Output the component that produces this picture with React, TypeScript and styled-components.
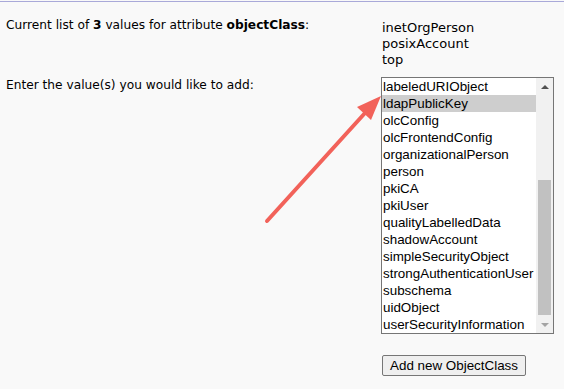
import React from "react";
import styled, { createGlobalStyle } from "styled-components";

const Global = createGlobalStyle`
  html, body { margin: 0; padding: 0; background: #f9f9f9; }
  body { width: 564px; height: 389px; overflow: hidden; }
`;

const Page = styled.div`
  position: relative;
  margin-top: 1px;
  border-top: 1px solid #a9a9d9;
  height: 387px;
  padding: 14px 0 0 6px;
  box-sizing: border-box;
`;

const Form = styled.div`
  display: grid;
  grid-template-columns: 375px 1fr;
  row-gap: 8px;
  font-family: "DejaVu Sans", Verdana, sans-serif;
  font-size: 12.2px;
  color: #000;
`;

const Label = styled.div`
  line-height: 16px;
  padding-top: 1px;
`;

const Values = styled.div`
  display: flex;
  flex-direction: column;
  font-size: 13px;
  line-height: 16px;
  padding-top: 4px;
  padding-left: 1px;
`;

const ListBox = styled.div`
  display: flex;
  width: 173px;
  height: 257px;
  box-sizing: border-box;
  border: 1px solid #767676;
  background: #fff;
  margin-top: 1px;
`;

const Items = styled.div`
  flex: 1;
  display: flex;
  flex-direction: column;
  overflow: hidden;
  justify-content: flex-end;
`;

const Item = styled.div<{ $selected?: boolean }>`
  height: 17px;
  line-height: 17px;
  flex: none;
  padding-left: 1px;
  font-family: "Liberation Sans", Arial, sans-serif;
  font-size: 13.4px;
  color: #000;
  white-space: nowrap;
  background: ${(p) => (p.$selected ? "#cecece" : "transparent")};
`;

const ScrollBar = styled.div`
  width: 17px;
  background: #f1f1f1;
  display: flex;
  flex-direction: column;
  align-items: center;
`;

const ScrollArrow = styled.div<{ $down?: boolean; $disabled?: boolean }>`
  height: 17px;
  width: 17px;
  flex: none;
  display: flex;
  align-items: center;
  justify-content: center;
  &::before {
    content: "";
    width: 0;
    height: 0;
    border-left: 4px solid transparent;
    border-right: 4px solid transparent;
    ${(p) =>
      p.$down
        ? `border-top: 4px solid ${p.$disabled ? "#a3a3a3" : "#505050"};`
        : `border-bottom: 4px solid ${p.$disabled ? "#a3a3a3" : "#505050"};`}
  }
`;

const Track = styled.div`
  flex: 1;
  width: 100%;
  display: flex;
  flex-direction: column;
  justify-content: flex-end;
  align-items: center;
  padding-bottom: 1px;
`;

const Thumb = styled.div`
  width: 13px;
  height: 135px;
  background: #c1c1c1;
`;

const ButtonRow = styled.div`
  grid-column: 2;
  padding-top: 13px;
`;

const Button = styled.button`
  font-family: "Liberation Sans", Arial, sans-serif;
  font-size: 13.4px;
  height: 21px;
  padding: 0 7px;
  background: #efefef;
  border: 1px solid #767676;
  border-radius: 2px;
  color: #000;
  margin-left: 1px;
`;

const Arrow = styled.svg`
  position: absolute;
  left: 0;
  top: -2px;
  pointer-events: none;
`;

const items = [
  "labeledURIObject",
  "ldapPublicKey",
  "olcConfig",
  "olcFrontendConfig",
  "organizationalPerson",
  "person",
  "pkiCA",
  "pkiUser",
  "qualityLabelledData",
  "shadowAccount",
  "simpleSecurityObject",
  "strongAuthenticationUser",
  "subschema",
  "uidObject",
  "userSecurityInformation",
];

export default function App() {
  return (
    <>
      <Global />
      <Page>
        <Form>
          <Label>
            Current list of <b>3</b> values for attribute <b>objectClass</b>:
          </Label>
          <Values>
            <span>inetOrgPerson</span>
            <span>posixAccount</span>
            <span>top</span>
          </Values>
          <Label>Enter the value(s) you would like to add:</Label>
          <ListBox role="listbox">
            <Items>
              {items.map((it) => (
                <Item key={it} $selected={it === "ldapPublicKey"}>
                  {it}
                </Item>
              ))}
            </Items>
            <ScrollBar>
              <ScrollArrow />
              <Track>
                <Thumb />
              </Track>
              <ScrollArrow $down $disabled />
            </ScrollBar>
          </ListBox>
          <ButtonRow>
            <Button>Add new ObjectClass</Button>
          </ButtonRow>
        </Form>
        <Arrow width="564" height="389" viewBox="0 0 564 389">
          <line x1="267" y1="221" x2="365" y2="113" stroke="#f2625a" strokeWidth="4" strokeLinecap="round" />
          <polygon points="381,96 357,107 371,120" fill="#f2625a" />
        </Arrow>
      </Page>
    </>
  );
}
